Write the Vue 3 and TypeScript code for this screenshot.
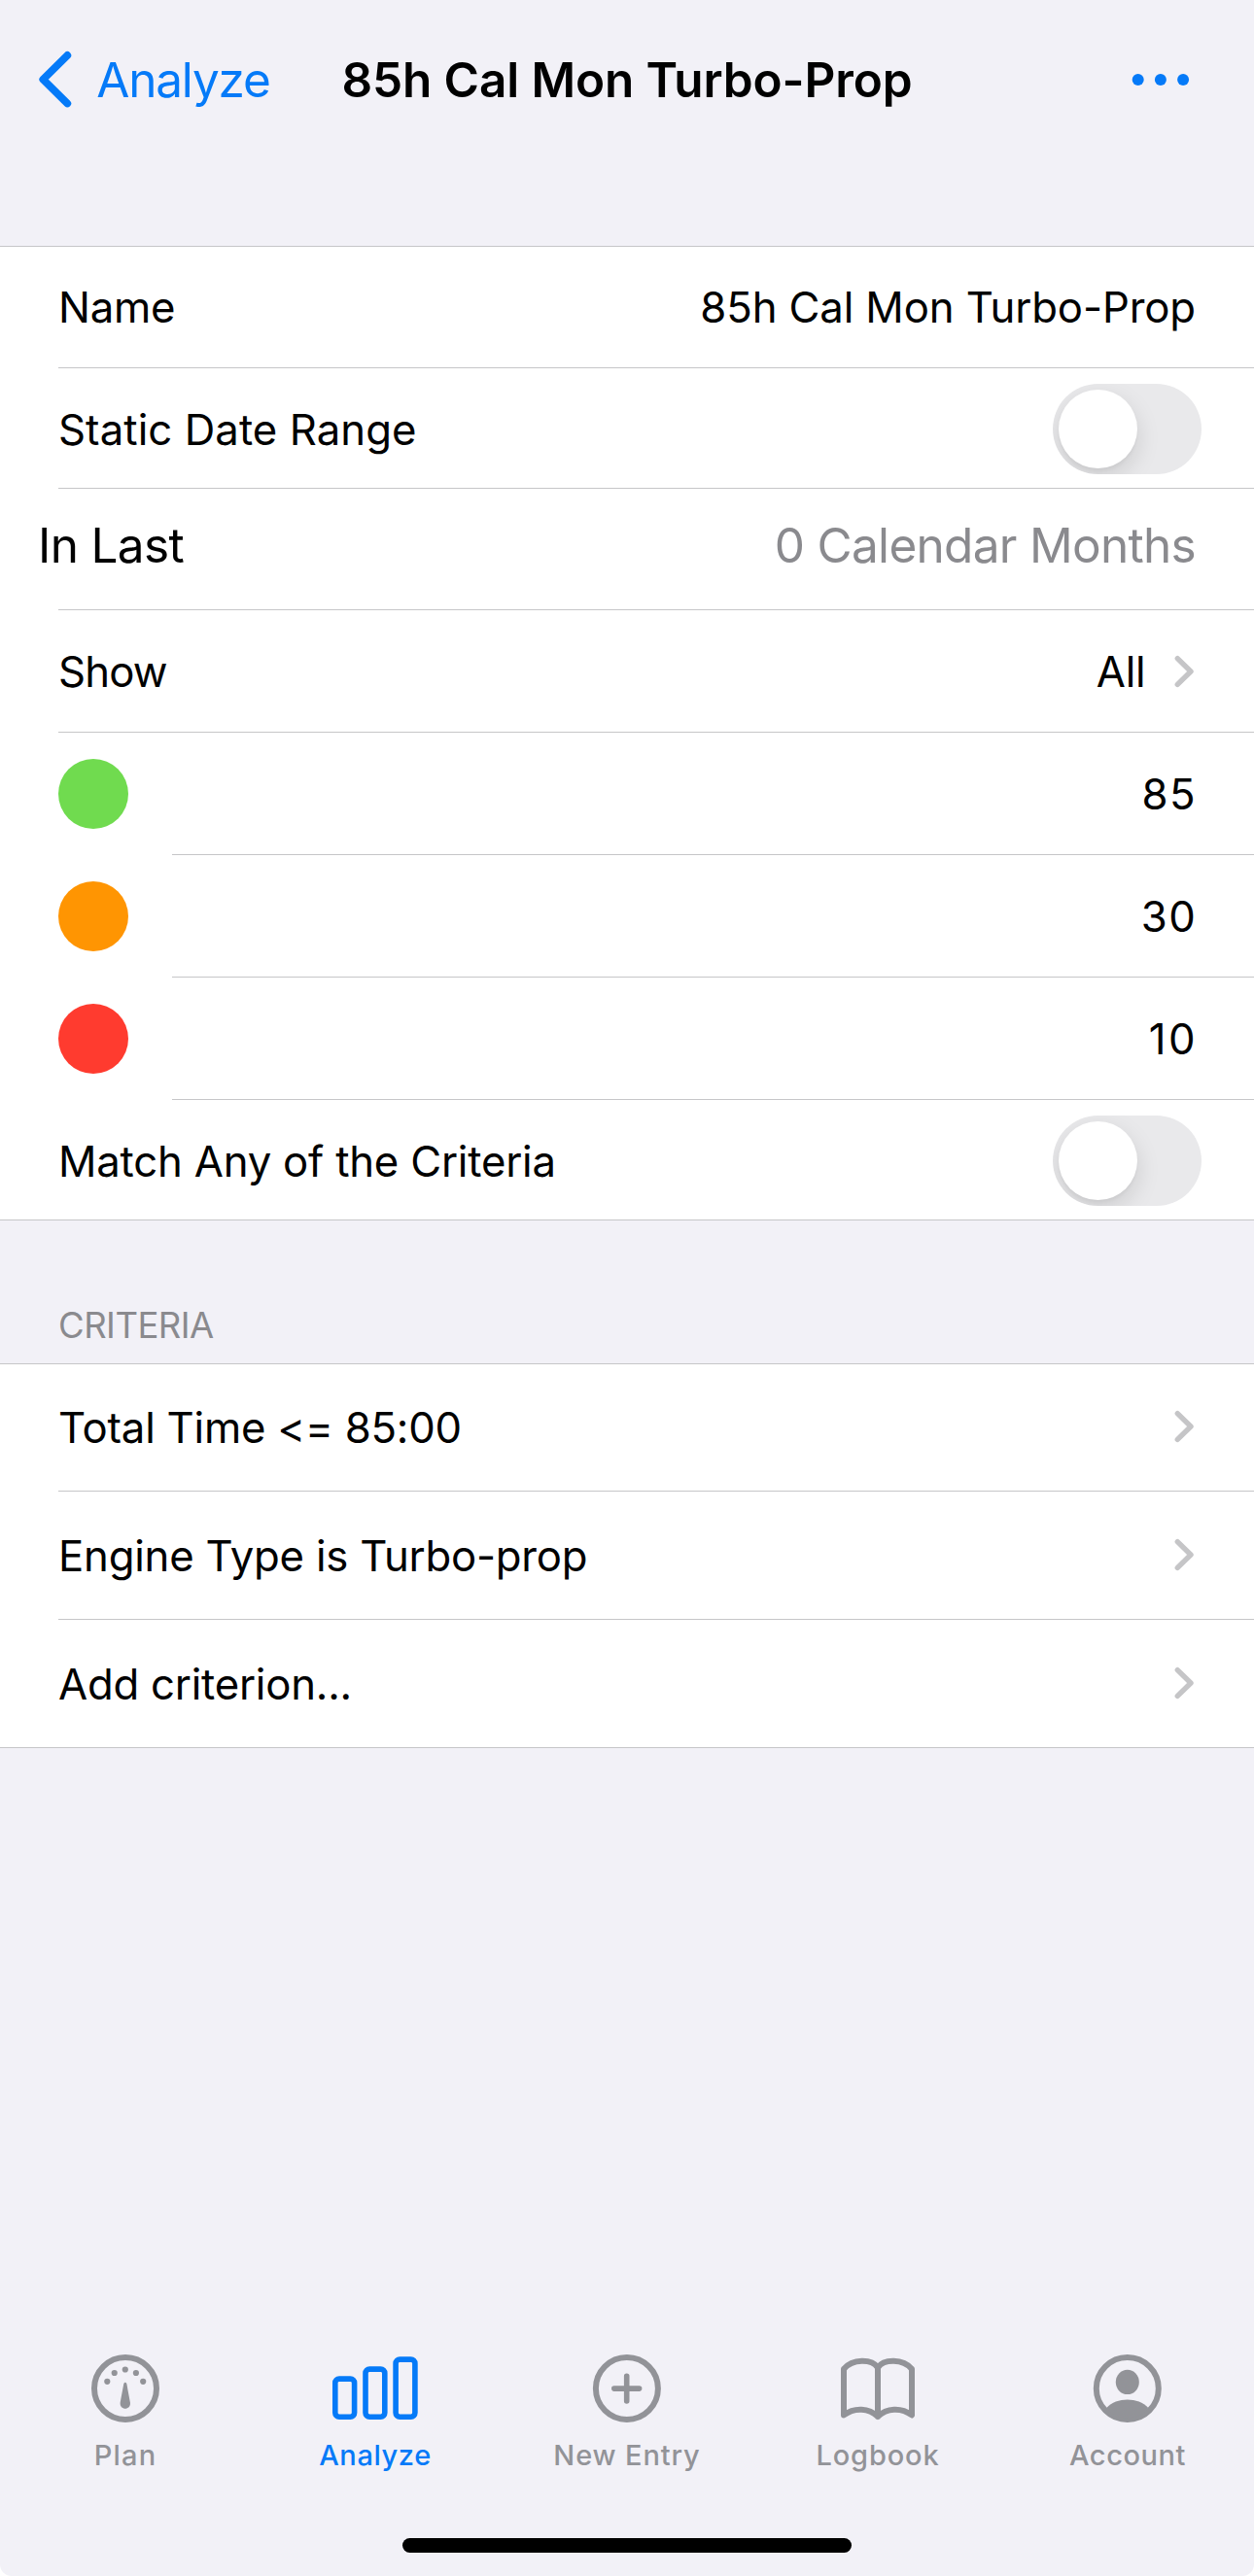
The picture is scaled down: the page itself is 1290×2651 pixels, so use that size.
<script setup lang="ts">
import { ref } from 'vue'

interface Threshold {
  color: string
  value: string
}

interface Criterion {
  text: string
  size: string
}

interface Tab {
  id: string
  label: string
}

const name = ref('85h Cal Mon Turbo-Prop')
const staticRange = ref(false)
const matchAny = ref(false)

const thresholds: Threshold[] = [
  { color: 'green', value: '85' },
  { color: 'orange', value: '30' },
  { color: 'red', value: '10' },
]

const criteria: Criterion[] = [
  { text: 'Total Time <= 85:00', size: 'short' },
  { text: 'Engine Type is Turbo-prop', size: 'tall' },
  { text: 'Add criterion...', size: 'tall' },
]

const tabs: Tab[] = [
  { id: 'plan', label: 'Plan' },
  { id: 'analyze', label: 'Analyze' },
  { id: 'new', label: 'New Entry' },
  { id: 'logbook', label: 'Logbook' },
  { id: 'account', label: 'Account' },
]
const active = ref('analyze')
</script>

<template>
  <div class="screen">
    <header class="nav">
      <button class="back">
        <svg width="40" height="64" viewBox="0 0 40 64" fill="none" stroke="currentColor" stroke-width="7.8" stroke-linecap="round" stroke-linejoin="round">
          <path d="M29.3 7 L4.3 31.7 L29.3 56.4" />
        </svg>
        <span>Analyze</span>
      </button>
      <h1>{{ name }}</h1>
      <button class="more" aria-label="More">
        <svg width="60" height="14" viewBox="0 0 60 14" fill="currentColor">
          <circle cx="6.7" cy="7" r="6" />
          <circle cx="29.9" cy="7" r="6" />
          <circle cx="53.1" cy="7" r="6" />
        </svg>
      </button>
    </header>

    <main>
      <section class="group">
        <div class="row">
          <div class="cell h125">
            <span class="title">Name</span>
            <span class="value name">{{ name }}</span>
          </div>
        </div>
        <div class="row">
          <div class="cell h124">
            <span class="static">Static Date Range</span>
            <button class="switch" role="switch" :aria-checked="staticRange" @click="staticRange = !staticRange">
              <span class="knob" :class="{ on: staticRange }"></span>
            </button>
          </div>
        </div>
        <div class="row">
          <div class="cell h125 large">
            <span class="outdent">In Last</span>
            <span class="value muted">0 Calendar Months</span>
          </div>
        </div>
        <div class="row">
          <div class="cell h126">
            <span class="show">Show</span>
            <span class="value all">All</span>
            <svg class="chevron" width="22" height="34" viewBox="0 0 22 34">
              <path d="M3.3 3.6 L17 17 L3.3 30.4" />
            </svg>
          </div>
        </div>
        <div v-for="t in thresholds" :key="t.color" class="row">
          <span class="dot" :class="t.color"></span>
          <div class="cell h126">
            <span class="value digits" :class="t.color">{{ t.value }}</span>
          </div>
        </div>
        <div class="row last">
          <div class="cell h124">
            <span class="match">Match Any of the Criteria</span>
            <button class="switch" role="switch" :aria-checked="matchAny" @click="matchAny = !matchAny">
              <span class="knob" :class="{ on: matchAny }"></span>
            </button>
          </div>
        </div>
      </section>

      <h2>CRITERIA</h2>

      <section class="group">
        <div v-for="(c, i) in criteria" :key="c.text" class="row" :class="{ last: i === criteria.length - 1 }">
          <div class="cell" :class="c.size">
            <span class="criterion">{{ c.text }}</span>
            <svg class="chevron" width="22" height="34" viewBox="0 0 22 34">
              <path d="M3.3 3.6 L17 17 L3.3 30.4" />
            </svg>
          </div>
        </div>
      </section>
    </main>

    <nav class="tabs">
      <button v-for="t in tabs" :key="t.id" class="tab" :class="[t.id, { active: active === t.id }]" @click="active = t.id">
        <svg width="100" height="80" viewBox="0 0 100 80" fill="none" stroke="currentColor" stroke-width="6" stroke-linecap="round" stroke-linejoin="round">
          <template v-if="t.id === 'plan'">
            <circle cx="50" cy="40" r="32" />
            <g fill="currentColor" stroke="none">
              <circle cx="31.3" cy="32.8" r="3.1" />
              <circle cx="38.7" cy="24" r="3.1" />
              <circle cx="49.8" cy="20.5" r="3.1" />
              <circle cx="60.9" cy="24" r="3.1" />
              <circle cx="68.2" cy="32.8" r="3.1" />
              <path d="M48.3 35 Q49.8 32.4 51.3 35 L54.9 54.5 C55.9 62.8 43.7 62.8 44.7 54.5 Z" />
            </g>
          </template>
          <template v-else-if="t.id === 'analyze'">
            <g stroke-width="5.6">
              <rect x="8.8" y="30.1" width="19.8" height="39.1" rx="4.2" />
              <rect x="40" y="20.1" width="19.8" height="49.1" rx="4.2" />
              <rect x="71.1" y="10.1" width="19.8" height="59.1" rx="4.2" />
            </g>
          </template>
          <template v-else-if="t.id === 'new'">
            <circle cx="49.9" cy="40" r="32" />
            <path stroke-width="5.6" d="M36.8 40.1 H62.6 M49.7 27.2 V53" />
          </template>
          <template v-else-if="t.id === 'logbook'">
            <path d="M50 18.5 C44 9.5 24 9 15 20 V67.5 C26 59 41 60 50 69 C59 60 74 59 85 67.5 V20 C76 9 56 9.5 50 18.5 V69" />
          </template>
          <template v-else>
            <circle cx="49.8" cy="40" r="32" />
            <g fill="currentColor" stroke="none">
              <ellipse cx="49.8" cy="33.4" rx="12" ry="12.7" />
              <path d="M28.3 60 C38.5 48.8 61 48.8 71.3 60 C61 74 38.5 74 28.3 60 Z" />
            </g>
          </template>
        </svg>
        <span>{{ t.label }}</span>
      </button>
    </nav>

    <div class="home-area"><div class="home"></div></div>
  </div>
</template>

<style>
body {
  background: #fff;
}
</style>

<style scoped>
.screen {
  display: flex;
  flex-direction: column;
  width: 1290px;
  height: 2651px;
  overflow: hidden;
  border-radius: 0 0 12px 12px;
  background: #f2f1f7;
  color: #000;
  font-family: Inter, "Liberation Sans", sans-serif;
  font-size: 43.7px;
  white-space: nowrap;
}

button {
  padding: 0;
  border: 0;
  background: none;
  color: inherit;
  font: inherit;
}

.nav {
  display: grid;
  grid-template-columns: 1fr auto 1fr;
  align-items: center;
  height: 164px;
  margin-bottom: 89px;
  font-size: 49.5px;
}

.back,
.more {
  display: flex;
  align-items: center;
  color: #057af8;
}

.back {
  padding-left: 39.7px;
  gap: 19.6px;
  letter-spacing: -1.2px;
}

.back svg {
  flex: none;
}

h1 {
  margin: 0;
  font-size: 49.5px;
  font-weight: 600;
  letter-spacing: -0.13px;
}

.more {
  justify-content: flex-end;
  padding-right: 66px;
}

.group {
  border-top: 1px solid #c6c6c8;
  background: #fff;
}

.row {
  display: flex;
  align-items: center;
  padding-left: 60px;
}

.cell {
  flex: 1;
  display: flex;
  align-items: center;
  box-sizing: border-box;
  padding-right: 60px;
  border-bottom: 1px solid #c6c6c8;
}

.row.last {
  border-bottom: 1px solid #c6c6c8;
}

.row.last .cell {
  margin-bottom: -1px;
  border-bottom-color: transparent;
}

.h124 { height: 124px; }
.h125 { height: 125px; }
.h126 { height: 126px; }
.short { height: 131px; }
.tall { height: 132px; }

.value {
  margin-left: auto;
}

.title { letter-spacing: -0.2px; }
.name { letter-spacing: -0.12px; }
.static { letter-spacing: 0.07px; padding-top: 3px; }
.show { letter-spacing: -0.85px; padding-top: 1px; }
.match { letter-spacing: -0.2px; padding-top: 3px; }
.criterion { letter-spacing: -0.22px; padding-top: 1px; }

.large {
  padding-bottom: 8px;
  font-size: 49.5px;
  letter-spacing: -0.65px;
}

.outdent {
  margin-left: -21px;
}

.muted {
  color: #8a8a8e;
  letter-spacing: -0.7px;
}

.all {
  padding-top: 1px;
  letter-spacing: -0.26px;
}

.digits {
  margin-right: -1.2px;
  padding-top: 2px;
  letter-spacing: 1.5px;
}

.digits.red {
  margin-right: -2px;
  letter-spacing: 2.4px;
}

.chevron {
  flex: none;
  margin-left: auto;
  fill: none;
  stroke: #c5c5c7;
  stroke-width: 5.4;
  stroke-linecap: round;
  stroke-linejoin: round;
}

.criterion + .chevron {
  margin-bottom: 2px;
}

.all + .chevron {
  margin-left: 29.7px;
}

.dot {
  width: 72px;
  height: 72px;
  margin-right: 45px;
  border-radius: 50%;
}

.dot.green { background: #70db4f; }
.dot.orange { background: #ff9502; }
.dot.red { background: #ff3b2f; }

.switch {
  display: flex;
  box-sizing: border-box;
  width: 153px;
  height: 93px;
  margin: 1px -6px 0 auto;
  padding: 6px;
  overflow: hidden;
  border-radius: 46.5px;
  background: #e9e9eb;
}

.knob {
  width: 81px;
  height: 81px;
  border-radius: 50%;
  background: #fff;
  box-shadow: 0 9px 24px rgba(0, 0, 0, 0.13), 0 3px 3px rgba(0, 0, 0, 0.03);
}

.knob.on {
  margin-left: auto;
}

h2 {
  display: flex;
  align-items: flex-end;
  box-sizing: border-box;
  height: 147px;
  margin: 0;
  padding: 0 0 17px 60px;
  color: #8a8a8e;
  font-size: 36.5px;
  font-weight: 400;
  line-height: 44px;
  letter-spacing: -0.52px;
}

.tabs {
  display: grid;
  grid-template-columns: 258px 256px 262px 254px 260px;
  margin-top: auto;
}

.tab {
  display: flex;
  flex-direction: column;
  align-items: center;
  color: #929398;
  font-size: 29px;
  font-weight: 500;
  line-height: 36px;
}

.tab svg {
  margin-bottom: 11px;
}

.tab.active {
  color: #057af8;
}

.plan { letter-spacing: 1.2px; }
.analyze { letter-spacing: 0.6px; }
.new { letter-spacing: 0.88px; }
.logbook { letter-spacing: 0.86px; }
.account { letter-spacing: 0.58px; }

.home-area {
  display: flex;
  flex: none;
  justify-content: center;
  box-sizing: border-box;
  height: 106px;
  padding-top: 67px;
}

.home {
  width: 462px;
  height: 15px;
  border-radius: 7.5px;
  background: #000;
}
</style>
